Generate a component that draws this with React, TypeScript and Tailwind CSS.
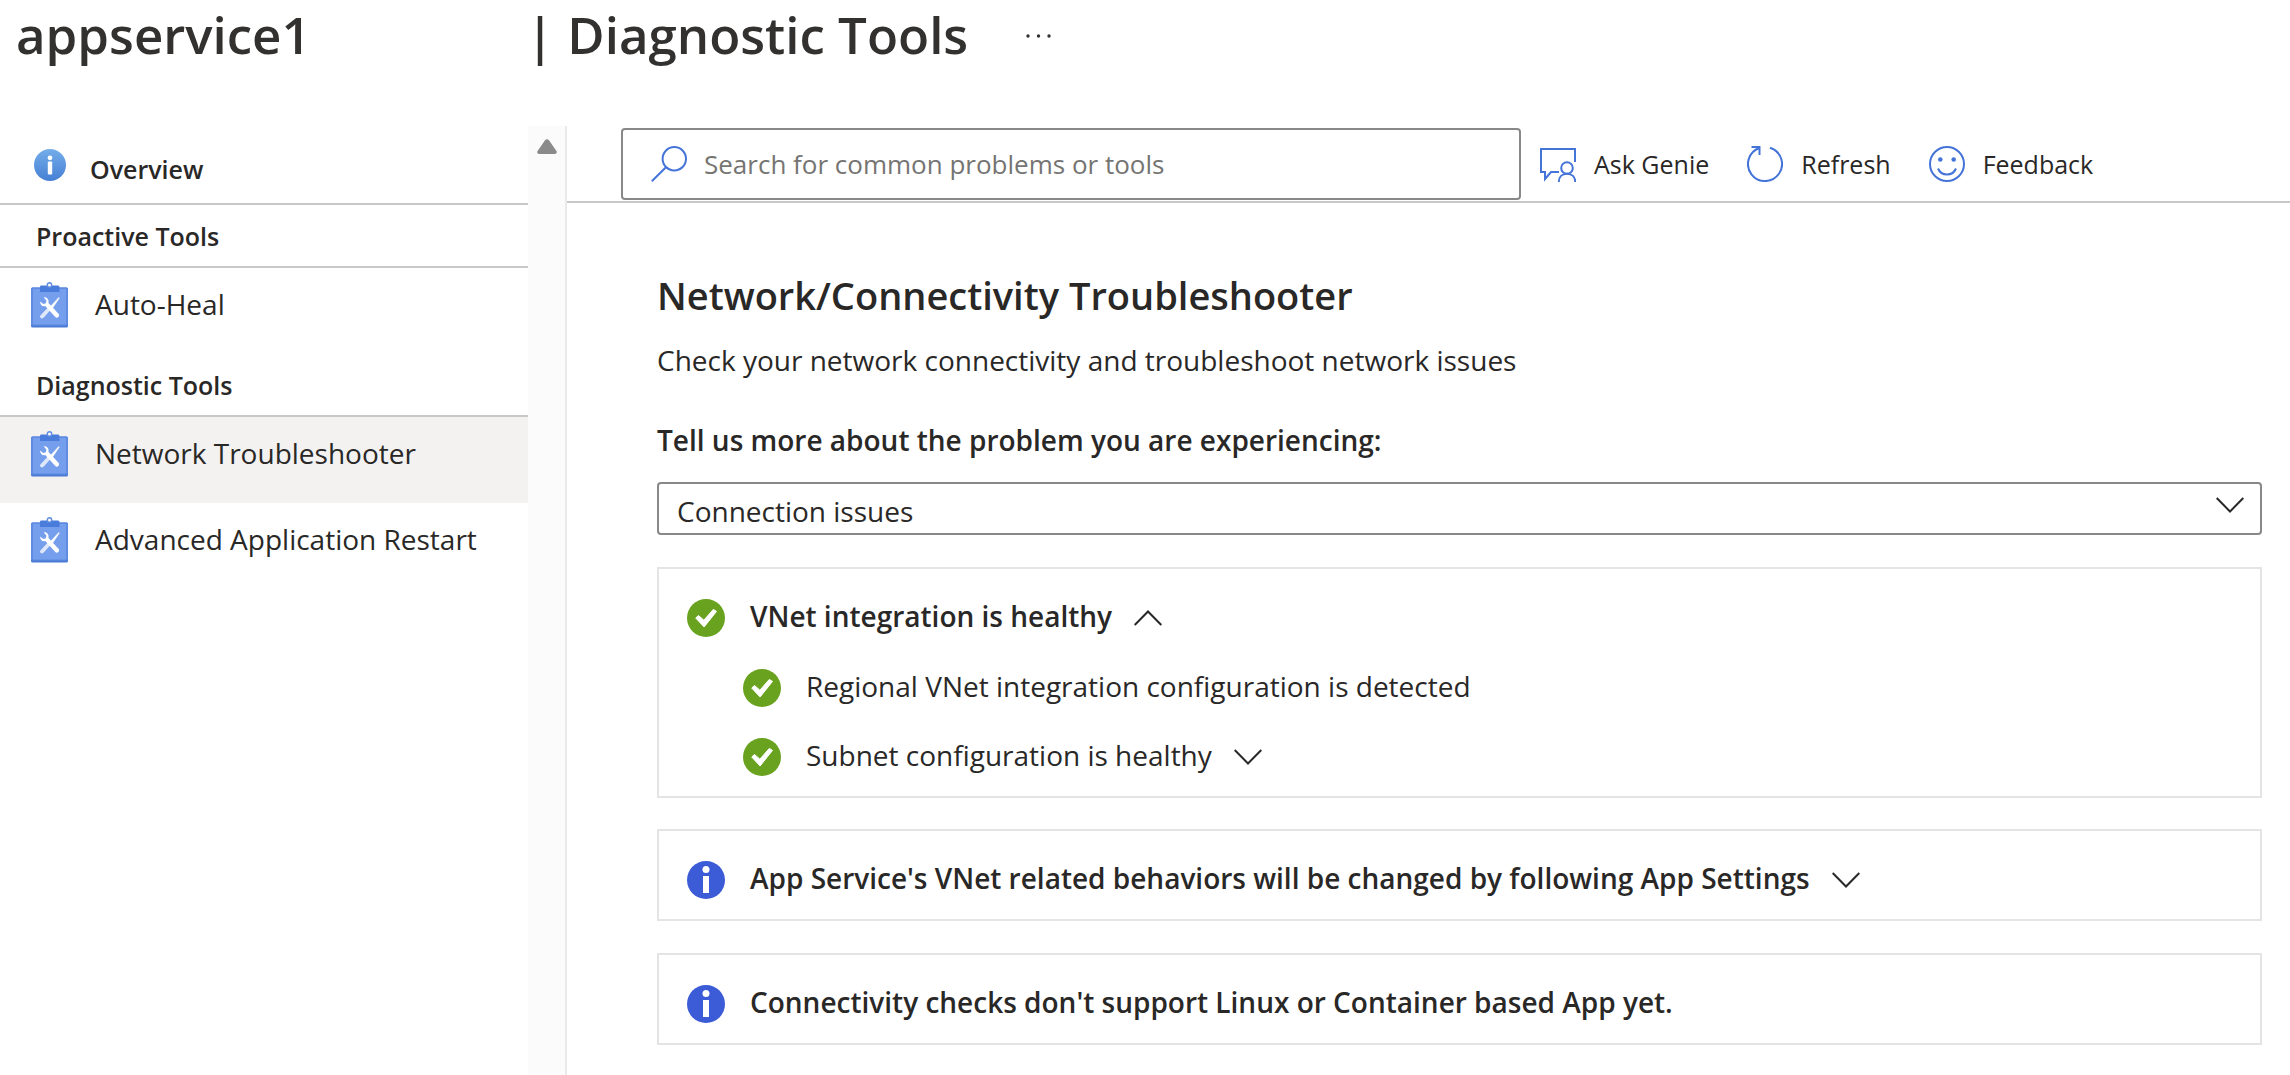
import type { ReactNode } from "react";

const font = "font-['Open_Sans','Noto_Sans',sans-serif]";

function InfoGradientIcon() {
  return (
    <svg viewBox="0 0 32 32" className="size-8 shrink-0" aria-hidden="true">
      <defs>
        <linearGradient id="overviewFill" x1="0" y1="0" x2="0" y2="1">
          <stop offset="0" stopColor="#74ade9" />
          <stop offset="1" stopColor="#4580d4" />
        </linearGradient>
      </defs>
      <circle cx="16" cy="16" r="16" fill="url(#overviewFill)" />
      <circle cx="16" cy="8.8" r="2.4" fill="#fff" />
      <rect x="13.8" y="12.6" width="4.4" height="13" rx="1" fill="#fff" />
    </svg>
  );
}

function ClipboardIcon() {
  return (
    <svg viewBox="0 0 37 46" className="h-[46px] w-[37px] shrink-0" aria-hidden="true">
      <rect x="0" y="5.5" width="37" height="40" rx="1.5" fill="#4a7bd5" />
      <rect x="0" y="5.5" width="37" height="38" rx="1.5" fill="#5f8ce2" />
      <rect x="2" y="7" width="33" height="35.500" rx="1" fill="#759eec" />
      <path d="M10 3.500h17a1.500 1.500 0 0 1 1.500 1.500V10H9V5A1.500 1.500 0 0 1 10 3.500z" fill="#4a7ddb" />
      <circle cx="18.500" cy="2.900" r="2.200" fill="#fff" stroke="#5f8ce2" strokeWidth="1.400" />
      <path d="M9.600 33.200l8.200-8.700 2.600 2.400-7.600 8.700c-.9 1-2.300 1-3.200.2-.8-.8-.8-1.800 0-2.600z" fill="#dfe8fb" />
      <path d="M19.200 24.800L27.800 15.600l.5.500-7 10.300z" fill="#fff" stroke="#fff" strokeWidth=".6" />
      <path
        d="M12.800 15.400c3.200-.4 5.400 2.400 4.700 5.600l10 10.800c.9 1 .8 2.400-.2 3.300-1 .8-2.300.7-3.200-.3L14.200 24c-2.700.8-5.300-1.200-5-4.600l3 2.500 2.700-.7.500-2.800z"
        fill="#fff"
      />
    </svg>
  );
}

function CheckIcon() {
  return (
    <svg viewBox="0 0 38 38" className="size-[38px] shrink-0" aria-hidden="true">
      <circle cx="19" cy="19" r="19" fill="#69a21f" />
      <path d="M8.700 19l2.800-2.500 5.400 4.700L26.300 10.400l3.200 2L17.100 28z" fill="#fff" stroke="#fff" strokeWidth="1" strokeLinejoin="round" />
    </svg>
  );
}

function InfoIcon() {
  return (
    <svg viewBox="0 0 38 38" className="size-[38px] shrink-0" aria-hidden="true">
      <circle cx="19" cy="19" r="19" fill="#3b5bd7" />
      <circle cx="19" cy="8.500" r="3.500" fill="#fff" />
      <rect x="16" y="15" width="6" height="17" fill="#fff" />
    </svg>
  );
}

function Chevron({ up = false }: { up?: boolean }) {
  return (
    <svg viewBox="0 0 28 16" className="h-4 w-7 shrink-0" fill="none" stroke="#292827" strokeWidth="2" aria-hidden="true">
      <path d={up ? "M.7 15L14 1.500 27.300 15" : "M.7 1L14 14.500 27.300 1"} />
    </svg>
  );
}

function SearchIcon() {
  return (
    <svg viewBox="0 0 36 36" className="size-9 shrink-0" fill="none" stroke="#4474d8" strokeWidth="2" aria-hidden="true">
      <circle cx="23.300" cy="12.700" r="11.700" />
      <path d="M15.200 21L.8 35.200" />
    </svg>
  );
}

function GenieIcon() {
  return (
    <svg viewBox="0 0 36 36" className="size-9 shrink-0" fill="none" stroke="#4474d8" strokeWidth="2" aria-hidden="true">
      <path d="M35 16V3H1v23h4v7l6-7h8" />
      <circle cx="27" cy="22" r="5.800" />
      <path d="M18.800 36c0-5 3.300-8.200 8.200-8.200s8.200 3.200 8.200 8.200" />
    </svg>
  );
}

function RefreshIcon() {
  return (
    <svg viewBox="0 0 36 36" className="size-9 shrink-0" fill="none" stroke="#4474d8" strokeWidth="2" aria-hidden="true">
      <path d="M23 1.800A17 17 0 1 1 12.400 2" />
      <path d="M4.500 1H12.500V9" />
    </svg>
  );
}

function SmileIcon() {
  return (
    <svg viewBox="0 0 36 36" className="size-9 shrink-0" fill="none" stroke="#4474d8" strokeWidth="2" aria-hidden="true">
      <circle cx="18" cy="18" r="17" />
      <circle cx="11.300" cy="13.500" r="2.300" fill="#4474d8" stroke="none" />
      <circle cx="24.700" cy="13.500" r="2.300" fill="#4474d8" stroke="none" />
      <path d="M9 22.500c1.500 3.700 5 6 9 6s7.500-2.300 9-6" />
    </svg>
  );
}

function NavHeading({ children }: { children: ReactNode }) {
  return (
    <h2 className="flex h-[63px] items-center border-b-2 border-[#c8c8c8] pl-9 text-[25px] leading-9 font-semibold">{children}</h2>
  );
}

function NavItem({ label, selected = false }: { label: string; selected?: boolean }) {
  return (
    <a
      href="#"
      aria-current={selected ? "page" : undefined}
      className={`flex h-[86px] items-start gap-[27px] pt-[14px] pl-[31px] text-[28px] leading-11 ${selected ? "bg-[#f3f2f1]" : ""}`}
    >
      <ClipboardIcon />
      <span>{label}</span>
    </a>
  );
}

function ToolButton({ icon, label }: { icon: ReactNode; label: string }) {
  return (
    <button type="button" className="flex items-center gap-[18px] whitespace-nowrap text-[25px] leading-9">
      {icon}
      <span>{label}</span>
    </button>
  );
}

function ResultLine({ icon, children, chevron }: { icon: ReactNode; children: ReactNode; chevron?: "up" | "down" }) {
  const content = (
    <>
      {icon}
      <span className="flex items-center gap-[22px]">
        <span className="pb-1">{children}</span>
        {chevron && <Chevron up={chevron === "up"} />}
      </span>
    </>
  );
  const row = "flex items-center gap-[25px] text-left text-[28px] leading-9";
  return chevron ? (
    <button type="button" aria-expanded={chevron === "up"} className={row}>
      {content}
    </button>
  ) : (
    <div className={row}>{content}</div>
  );
}

export default function App() {
  return (
    <div className={`flex min-h-screen flex-col bg-white text-[#292827] ${font}`}>
      <header className="flex h-[126px] items-start pl-4 text-[51px] leading-[68px] font-semibold text-[#323130]">
        <h1 className="flex">
          <span className="w-[510px]">appservice1</span>
          <span>| Diagnostic Tools</span>
        </h1>
        <button type="button" aria-label="More options" className="ml-[58px] flex h-[72px] items-center">
          <svg viewBox="0 0 26 4" className="h-1 w-[26px]" fill="#323130" aria-hidden="true">
            <circle cx="2" cy="2" r="1.700" />
            <circle cx="12.500" cy="2" r="1.700" />
            <circle cx="23" cy="2" r="1.700" />
          </svg>
        </button>
      </header>

      <div className="flex flex-1">
        <nav className="w-[528px] shrink-0" aria-label="Diagnostic tools">
          <a href="#" className="flex h-[79px] items-center gap-6 border-b-2 border-[#c8c8c8] pl-[34px] text-[25px] font-semibold">
            <InfoGradientIcon />
            <span className="pt-2.5">Overview</span>
          </a>
          <NavHeading>Proactive Tools</NavHeading>
          <NavItem label="Auto-Heal" />
          <NavHeading>Diagnostic Tools</NavHeading>
          <NavItem label="Network Troubleshooter" selected />
          <NavItem label="Advanced Application Restart" />
        </nav>
        <div className="flex w-[39px] shrink-0 justify-center border-r-2 border-[#eaeaea] bg-[#fbfbfb] pt-[13px]">
          <svg viewBox="0 0 20 15" className="h-[15px] w-5" aria-hidden="true">
            <path d="M8 1.300a2.400 2.400 0 0 1 4 0L19.400 12a1.900 1.900 0 0 1-1.600 3H2.200A1.900 1.900 0 0 1 .6 12z" fill="#8a8a8a" />
          </svg>
        </div>

        <main className="min-w-0 flex-1">
          <div className="flex h-[77px] items-center gap-[19px] border-b-2 border-[#c8c8c8] pl-[54px]">
            <div className="flex h-[72px] w-[900px] items-center gap-[17px] rounded border-2 border-[#8a8886] pl-7">
              <SearchIcon />
              <input
                type="search"
                aria-label="Search for common problems or tools"
                placeholder="Search for common problems or tools"
                className="min-w-0 flex-1 text-[26px] leading-9 outline-none placeholder:text-[#757472]"
              />
            </div>
            <div className="flex items-center gap-[38px]">
              <ToolButton icon={<GenieIcon />} label="Ask Genie" />
              <ToolButton icon={<RefreshIcon />} label="Refresh" />
              <ToolButton icon={<SmileIcon />} label="Feedback" />
            </div>
          </div>

          <div className="pt-[62px] pr-7 pl-[90px]">
            <h2 className="text-[38px] leading-[60px] font-semibold">Network/Connectivity Troubleshooter</h2>
            <p className="pt-[15px] text-[28px] leading-10">Check your network connectivity and troubleshoot network issues</p>
            <label htmlFor="problem" className="mt-10 block text-[28px] leading-10 font-semibold">
              Tell us more about the problem you are experiencing:
            </label>
            <div className="relative mt-[22px]">
              <select
                id="problem"
                defaultValue="connection"
                className="block h-[53px] w-full appearance-none rounded border-2 border-[#8a8886] bg-white pt-1 pl-[18px] text-[28px] leading-10"
              >
                <option value="connection">Connection issues</option>
              </select>
              <span className="pointer-events-none absolute top-[15px] right-[18px]">
                <Chevron />
              </span>
            </div>

            <section className="mt-8 border-2 border-[#e4e4e4] px-7 pt-[29px] pb-[19px]">
              <div className="font-semibold">
                <ResultLine icon={<CheckIcon />} chevron="up">
                  VNet integration is healthy
                </ResultLine>
              </div>
              <ul className="flex flex-col gap-[29px] pt-[30px] pl-14">
                <li>
                  <ResultLine icon={<CheckIcon />}>Regional VNet integration configuration is detected</ResultLine>
                </li>
                <li>
                  <ResultLine icon={<CheckIcon />} chevron="down">
                    Subnet configuration is healthy
                  </ResultLine>
                </li>
              </ul>
            </section>

            <section className="mt-[31px] border-2 border-[#e4e4e4] px-7 pt-[29px] pb-[19px] font-semibold">
              <ResultLine icon={<InfoIcon />} chevron="down">
                App Service's VNet related behaviors will be changed by following App Settings
              </ResultLine>
            </section>

            <section className="mt-8 border-2 border-[#e4e4e4] px-7 pt-[29px] pb-[19px] font-semibold">
              <ResultLine icon={<InfoIcon />}>Connectivity checks don't support Linux or Container based App yet.</ResultLine>
            </section>
          </div>
        </main>
      </div>
    </div>
  );
}
